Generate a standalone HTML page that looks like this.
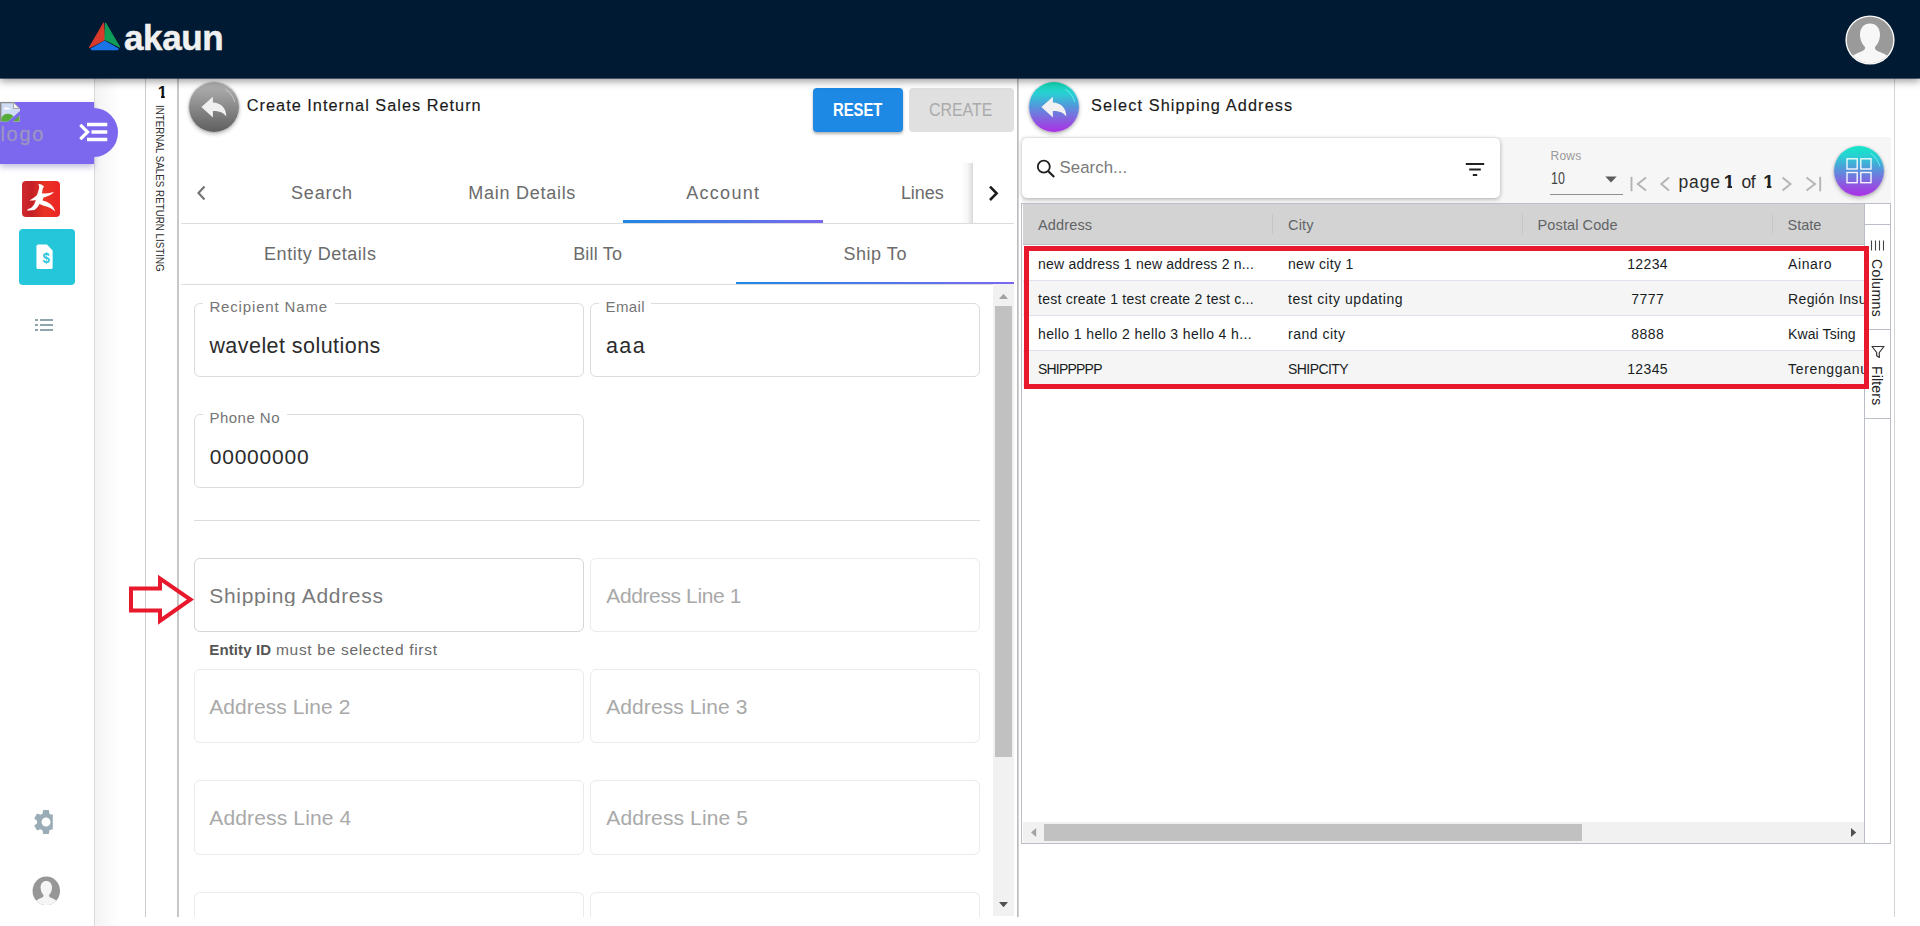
<!DOCTYPE html>
<html lang="en"><head><meta charset="utf-8"><title>akaun - Create Internal Sales Return</title>
<style>
html,body{margin:0;padding:0;}
body{width:1920px;height:926px;overflow:hidden;background:#fff;position:relative;font-family:"Liberation Sans",Arial,sans-serif;color:#222;}
.a{position:absolute;}
.t{position:absolute;white-space:nowrap;line-height:1;}
#hdr{left:0;top:0;width:1920px;height:78px;background:#001a33;box-shadow:0 1px 0 rgba(0,26,51,.62),0 3px 8px rgba(0,0,0,.42);z-index:20;}
#side{left:0;top:78px;width:94px;height:848px;background:#fff;border-right:1px solid #d9d9d9;z-index:5;}
#gap{left:95px;top:78px;width:50px;height:848px;background:linear-gradient(90deg,#f3f3f3 0,#fff 24px);}
#strip{left:145px;top:78px;width:31px;height:839px;border-left:1px solid #ccc;border-right:2px solid #c8c8c8;background:#fff;}
#lp{left:179px;top:78px;width:838px;height:839px;background:#fff;overflow:hidden;}
#rp{left:1018px;top:78px;width:875px;height:839px;background:#fff;border-left:1px solid #ccc;border-right:1px solid #d4d4d4;}
.circ{border-radius:50%;width:50px;height:50px;box-shadow:0 2px 4px rgba(0,0,0,.28),0 0 0 1px rgba(190,170,210,.25);}
.btn{border-radius:4px;height:44px;top:88px;}
.fld{border:1px solid #dcdcdc;border-radius:6px;box-sizing:border-box;width:390px;height:74px;background:#fff;}
.fld.dis{border-color:#ebebeb;}
.lbl{background:#fff;padding:0 6.5px;color:#757575;}
.ph{color:#a9a9a9;}
.tab{color:#6b6b6b;}
.gt{color:#181d1f;}
</style></head><body>

<!-- header -->
<div class="a" id="hdr">
  <svg class="a" style="left:88px;top:21px" width="34" height="31" viewBox="0 0 34 31">
    <path d="M15.6 2.2 L1.6 26.4 L16.6 18.6 Z" fill="#d93a2b" stroke="#d93a2b" stroke-width="1.2" stroke-linejoin="round"></path>
    <path d="M17.6 2.2 L31.6 26.0 L17.0 18.4 Z" fill="#0f9d58" stroke="#0f9d58" stroke-width="1.2" stroke-linejoin="round"></path>
    <path d="M16.6 19.6 L30.6 27.4 Q31 29.3 29 29.3 L4.2 29.3 Q2.2 29.3 2.6 27.4 Z" fill="#1a73e8"></path>
  </svg>
  <span class="t" id="logo" style="left: 124px; top: 19.5px; font-size: 35px; font-weight: bold; color: rgb(240, 240, 240); -webkit-text-stroke: 0.5px rgb(240, 240, 240); letter-spacing: -0.37px;">akaun</span>
  <svg class="a" style="left:1845.200px;top:14.900px" width="50" height="50" viewBox="0 0 50 50">
    <defs><clipPath id="cp1"><circle cx="25" cy="25" r="23.2"></circle></clipPath></defs>
    <circle cx="25" cy="25" r="24.6" fill="#fafafa"></circle>
    <circle cx="25" cy="25" r="23.2" fill="#9a9a9a"></circle>
    <g clip-path="url(#cp1)" fill="#f7f7f7">
      <path d="M25 8.5 C31 8.5 35 13 35 19.5 C35 25 32.5 29.5 30 32 C29.6 34 30.5 35.3 33 36.3 C38 38.2 42.5 40 44 43 L44 52 L6 52 L6 43 C7.5 40 12 38.2 17 36.3 C19.5 35.3 20.4 34 20 32 C17.5 29.5 15 25 15 19.5 C15 13 19 8.5 25 8.5 Z"></path>
    </g>
  </svg>
</div>

<!-- left sidebar -->
<div class="a" id="side">
  <div class="a" style="left:0;top:24px;width:94px;height:62px;background:#7b68ee;box-shadow:0 3px 6px rgba(80,70,160,.35)"></div>
</div>
<div class="a" style="left:70px;top:108px;width:48px;height:49px;border-radius:0 25px 25px 0;background:#7b68ee;z-index:6"></div>
<div class="a" style="left:0;top:102px;width:94px;height:62px;background:#7b68ee;z-index:6"></div>
<svg class="a" style="left:0;top:102px;z-index:7" width="20" height="20" viewBox="0 0 20 20">
  <path d="M0 0 H13.500 L20 6.500 V9 L8 19.500 H0 Z" fill="#cfdcf5"></path>
  <path d="M0 0.600 H13.500 M0.700 0 V19.500" stroke="#8c8c8c" stroke-width="1.400" fill="none"></path>
  <path d="M13.500 0.500 V6.500 H19.500 Z" fill="#f4f4f4" stroke="#a6a6a6" stroke-width="1"></path>
  <path d="M4 7 C4.500 5 7 4.500 7.500 6 C9 5.500 10 6.500 9.800 7.600 H4 Z" fill="#fff"></path>
  <path d="M1.400 19.500 V16 C3 12 8 10.500 12 13 L13.500 14.500 L8 19.500 Z" fill="#56ab3a"></path>
  <path d="M13 19.500 L19.500 13.500 V19.500 Z" fill="#56ab3a"></path>
  <path d="M19.600 13.500 V19.600 H13" stroke="#a6a6a6" stroke-width="1" fill="none"></path>
</svg>
<span class="t" id="logoalt" style="left: 0.5px; top: 124px; font-size: 20px; color: rgb(154, 150, 194); -webkit-text-stroke: 0.3px rgb(154, 150, 194); z-index: 7; letter-spacing: 1.67px;">logo</span>
<svg class="a" style="left:78px;top:120px;z-index:7" width="32" height="24" viewBox="0 0 32 24">
  <path d="M2.300 4.800 L9.600 12 L2.300 19.200" fill="none" stroke="#fff" stroke-width="3.200"></path>
  <path d="M9 4.500 H29.300 M13.500 12 H29.300 M9 19.500 H29.300" stroke="#fff" stroke-width="3.300" fill="none"></path>
</svg>
<!-- red app icon -->
<svg class="a" style="left:22px;top:181px;z-index:6" width="38" height="36" viewBox="0 0 38 36">
  <defs><linearGradient id="rg" x1="0" y1="0" x2="1" y2="0"><stop offset="0" stop-color="#d02a30"></stop><stop offset="0.250" stop-color="#c42026"></stop><stop offset="0.600" stop-color="#ea3324"></stop><stop offset="1" stop-color="#ec2426"></stop></linearGradient></defs>
  <rect x="0" y="0" width="38" height="36" rx="4" fill="url(#rg)"></rect>
  <path d="M16.500 3 C18 2.500 21 4 22 5.500 C21 7 20.500 8 20.500 9 L20 12.500 C24 12.500 28 12 32 11 C30 13.500 26 15.500 21.500 16.500 L20.500 19.500 C25 20.500 31 23 33.300 30.500 C30 27.500 26 25.500 21 24.500 L17.500 23 C16 26 14 28 12.500 29 C10 29.500 7 29.500 4.800 29.400 C6 28 7 27.500 9 27 C11.500 25 13 22 13.800 19 C11.500 19.500 9.500 19.800 7.400 19.500 C10 18 13 16 15 14 C16 11 17 8 17.200 6 C17 5 16.800 4 16.500 3 Z" fill="#fff"></path>
</svg>
<!-- teal tile -->
<div class="a" style="left:19px;top:229px;width:56px;height:56px;border-radius:4px;background:#26c6da;z-index:6"></div>
<svg class="a" style="left:35.800px;top:244.300px;z-index:7" width="17.500" height="25.500" viewBox="0 0 20 27" preserveAspectRatio="none">
  <path d="M2.5 0.5 H12.5 L19 7 V24.5 Q19 26.5 17 26.5 H2.5 Q0.5 26.5 0.5 24.5 V2.5 Q0.5 0.5 2.5 0.5 Z" fill="#fff"></path>
  <text x="11.500" y="20.500" font-family="Liberation Sans, sans-serif" font-weight="bold" font-size="15" fill="#26c6da" text-anchor="middle">$</text>
</svg>
<!-- list icon -->
<svg class="a" style="left:34px;top:318px;z-index:6" width="20" height="14" viewBox="0 0 20 14">
  <path d="M1 2 H4 M1 7 H4 M1 12 H4 M6 2 H19 M6 7 H19 M6 12 H19" stroke="#90a4ae" stroke-width="2" fill="none"></path>
</svg>
<!-- gear -->
<svg class="a" style="left:30.800px;top:806.900px;z-index:6;clip-path:inset(0 8px 0 0)" width="30" height="30" viewBox="0 0 24 24">
  <path fill="#9aacb6" d="M19.14 12.94c.04-.3.06-.61.06-.94 0-.32-.02-.64-.07-.94l2.03-1.58a.49.49 0 0 0 .12-.61l-1.92-3.32a.488.488 0 0 0-.59-.22l-2.39.96c-.5-.38-1.03-.7-1.62-.94l-.36-2.54a.484.484 0 0 0-.48-.41h-3.84c-.24 0-.43.17-.47.41l-.36 2.54c-.59.24-1.13.57-1.62.94l-2.39-.96c-.22-.08-.47 0-.59.22L2.74 8.87c-.12.21-.08.47.12.61l2.03 1.58c-.05.3-.09.63-.09.94s.02.64.07.94l-2.03 1.58a.49.49 0 0 0-.12.61l1.92 3.32c.12.22.37.29.59.22l2.39-.96c.5.38 1.03.7 1.62.94l.36 2.54c.05.24.24.41.48.41h3.84c.24 0 .44-.17.47-.41l.36-2.54c.59-.24 1.13-.56 1.62-.94l2.39.96c.22.08.47 0 .59-.22l1.92-3.32c.12-.22.07-.47-.12-.61l-2.01-1.58zM12 15.6c-1.98 0-3.6-1.62-3.6-3.6s1.620-3.6 3.6-3.6 3.6 1.620 3.600 3.600-1.620 3.600-3.600 3.600z"></path>
</svg>
<!-- small avatar -->
<svg class="a" style="left:31.900px;top:875.700px;z-index:6" width="28.600" height="29.800" viewBox="0 0 50 50" preserveAspectRatio="none">
  <defs><clipPath id="cp2"><circle cx="25" cy="25" r="24"></circle></clipPath></defs>
  <circle cx="25" cy="25" r="24" fill="#979797"></circle>
  <g clip-path="url(#cp2)" fill="#f5f5f5">
    <path d="M25 8.5 C31 8.5 35 13 35 19.500 C35 25 32.5 29.5 30 32 C29.6 34 30.5 35.3 33 36.3 C38 38.2 42.5 40 44 43 L44 52 L6 52 L6 43 C7.5 40 12 38.2 17 36.3 C19.5 35.3 20.4 34 20 32 C17.5 29.5 15 25 15 19.5 C15 13 19 8.5 25 8.5 Z"></path>
  </g>
</svg>
<div class="a" id="gap"></div>
<div class="a" id="strip"></div>
<span class="t" style="left:157.800px;top:84px;font-size:16.500px;font-weight:bold;color:#111;clip-path:polygon(0 0,9.200px 0,9.200px 11px,7px 11px,7px 16.500px,3.200px 16.500px,3.200px 11px,0 11px)">1</span>
<span class="t" id="vtxt" style="left: 165px; top: 105.3px; font-size: 11px; color: rgb(46, 46, 46); transform-origin: 0px 0px; transform: rotate(90deg) scaleX(0.89);">INTERNAL SALES RETURN LISTING</span>
<div class="a" id="lp"></div>
<!-- left panel content (page coords) -->
<div class="a circ" style="left:189px;top:82px;background:linear-gradient(180deg,#b5b5b5 0%,#8a8a8a 50%,#5e5e5e 100%)"></div>
<svg class="a" style="left:189px;top:82px" width="50" height="50" viewBox="0 0 50 50">
  <path d="M23.900 14.800 L12.400 25 L23.900 35.400 V29.100 C30.500 29.200 34.500 30.800 37.300 34.600 C37.300 26 32 20.900 23.900 20.500 Z" fill="#f0f0f0"></path>
  <path d="M36.800 7.500 A21.300 21.300 0 0 1 45.700 19.800" fill="none" stroke="rgba(255,255,255,.55)" stroke-width="0.800" stroke-linecap="round"></path>
</svg>
<span class="t" id="ttl1" style="left: 246.8px; top: 97px; font-size: 16.3px; color: rgb(26, 26, 26); -webkit-text-stroke: 0.15px rgb(26, 26, 26); letter-spacing: 1.02px;">Create Internal Sales Return</span>
<div class="a btn" style="left:813px;width:90px;background:#1e88e5;box-shadow:0 2px 3px rgba(0,0,0,.3)"></div>
<span class="t" style="left: 833.1px; top: 102px; font-size: 17.5px; font-weight: bold; color: rgb(255, 255, 255); transform-origin: 0px 0px; transform: scaleX(0.845);">RESET</span>
<div class="a btn" style="left:909px;width:105px;background:#e0e0e0"></div>
<span class="t" style="left: 929.4px; top: 102px; font-size: 17.5px; color: rgb(171, 171, 171); transform-origin: 0px 0px; transform: scaleX(0.91);">CREATE</span>
<!-- tabs row 1 -->
<svg class="a" style="left:195px;top:184px" width="12" height="18" viewBox="0 0 12 18"><path d="M9.500 2.500 L3.500 9 L9.500 15.500" fill="none" stroke="#757575" stroke-width="2.200"></path></svg>
<span class="t tab" style="left: 291.1px; top: 184px; font-size: 18px; letter-spacing: 0.76px;">Search</span>
<span class="t tab" style="left: 468.3px; top: 184px; font-size: 18px; letter-spacing: 0.73px;">Main Details</span>
<span class="t tab" style="left: 686.3px; top: 184px; font-size: 18px; letter-spacing: 1.27px;">Account</span>
<span class="t tab" style="left: 900.9px; top: 184px; font-size: 18px; letter-spacing: -0.03px;">Lines</span>
<div class="a" style="left:181px;top:223px;width:833px;height:1px;background:#dcdcdc"></div>
<div class="a" style="left:623px;top:220px;width:200px;height:3px;background:linear-gradient(90deg,#1e88e5,#7b68ee)"></div>
<div class="a" style="left:973px;top:163px;width:42px;height:60px;background:#fff"></div>
<div class="a" style="left:961px;top:163px;width:12px;height:60px;background:linear-gradient(90deg,rgba(0,0,0,0),rgba(0,0,0,.035) 55%,rgba(0,0,0,.15))"></div>
<svg class="a" style="left:987px;top:184px" width="13" height="18" viewBox="0 0 13 18"><path d="M3 2.600 L9.600 9.300 L3 16" fill="none" stroke="#1c1c1c" stroke-width="2.600"></path></svg>
<!-- tabs row 2 -->
<span class="t tab" style="left: 264.1px; top: 245px; font-size: 18px; letter-spacing: 0.52px;">Entity Details</span>
<span class="t tab" style="left: 573.2px; top: 245px; font-size: 18px; letter-spacing: 0.17px;">Bill To</span>
<span class="t tab" style="left: 843.4px; top: 245px; font-size: 18px; letter-spacing: 0.55px;">Ship To</span>
<div class="a" style="left:181px;top:284px;width:833px;height:1px;background:#dcdcdc"></div>
<div class="a" style="left:736px;top:282px;width:278px;height:2px;background:linear-gradient(90deg,#1e88e5,#7b68ee);z-index:3"></div>
<!-- form -->
<div class="a fld" style="left:194px;top:303px"></div>
<span class="t lbl" style="left: 202.9px; top: 299px; font-size: 15px; letter-spacing: 0.85px;">Recipient Name</span>
<span class="t" style="left: 209.4px; top: 336px; font-size: 21.5px; color: rgb(43, 43, 43); letter-spacing: 0.45px;">wavelet solutions</span>
<div class="a fld" style="left:590px;top:303px"></div>
<span class="t lbl" style="left: 599.1px; top: 299px; font-size: 15px; letter-spacing: 0.35px;">Email</span>
<span class="t" style="left: 606px; top: 336px; font-size: 21.5px; color: rgb(43, 43, 43); letter-spacing: 1.38px;">aaa</span>
<div class="a fld" style="left:194px;top:414px"></div>
<span class="t lbl" style="left: 202.9px; top: 410px; font-size: 15px; letter-spacing: 0.49px;">Phone No</span>
<span class="t" style="left: 209.75px; top: 446px; font-size: 21px; color: rgb(43, 43, 43); letter-spacing: 0.77px;">00000000</span>
<div class="a" style="left:194px;top:520px;width:786px;height:1px;background:#dcdcdc"></div>
<div class="a fld" style="left:194px;top:558px;border-color:#d6d6d6"></div>
<span class="t" style="left: 209.25px; top: 585px; font-size: 21px; color: rgb(122, 122, 122); letter-spacing: 0.68px;">Shipping Address</span>
<div class="a" style="left:205px;top:606px;width:185px;height:4px;background:#fff"></div>
<div class="a fld dis" style="left:590px;top:558px"></div>
<span class="t ph" style="left: 606.25px; top: 585px; font-size: 21px; letter-spacing: -0.38px;">Address Line 1</span>
<span class="t" style="left: 209.25px; top: 642px; font-size: 15px; font-weight: bold; color: rgb(85, 85, 85); letter-spacing: 0.13px;">Entity ID</span>
<span class="t" style="left: 276px; top: 642px; font-size: 15.5px; color: rgb(106, 106, 106); letter-spacing: 0.69px;">must be selected first</span>
<div class="a fld dis" style="left:194px;top:669px"></div>
<span class="t ph" style="left: 209.25px; top: 696px; font-size: 21px; letter-spacing: 0.08px;">Address Line 2</span>
<div class="a fld dis" style="left:590px;top:669px"></div>
<span class="t ph" style="left: 606.25px; top: 696px; font-size: 21px; letter-spacing: 0.08px;">Address Line 3</span>
<div class="a fld dis" style="left:194px;top:780px;height:75px"></div>
<span class="t ph" style="left: 209.25px; top: 807px; font-size: 21px; letter-spacing: 0.15px;">Address Line 4</span>
<div class="a fld dis" style="left:590px;top:780px;height:75px"></div>
<span class="t ph" style="left: 606.25px; top: 807px; font-size: 21px; letter-spacing: 0.12px;">Address Line 5</span>
<div class="a fld dis" style="left:194px;top:892px;height:40px;border-bottom:0;border-radius:6px 6px 0 0"></div>
<div class="a fld dis" style="left:590px;top:892px;height:40px;border-bottom:0;border-radius:6px 6px 0 0"></div>
<div class="a" style="left:145px;top:917px;width:1760px;height:9px;background:#fff"></div>
<!-- red arrow annotation -->
<svg class="a" style="left:127px;top:574px" width="68" height="52" viewBox="0 0 68 52">
  <path d="M4 14.500 H33 V4.500 L63.500 25.500 L33 47 V36.500 H4 Z" fill="none" stroke="#e8192c" stroke-width="4" stroke-linejoin="miter"></path>
</svg>
<!-- left scrollbar -->
<div class="a" style="left:993px;top:284px;width:21px;height:632px;background:#f1f1f1"></div>
<div class="a" style="left:995px;top:306px;width:17px;height:451px;background:#c1c1c1"></div>
<svg class="a" style="left:993px;top:284px" width="21" height="22" viewBox="0 0 21 22"><path d="M6 15 L10.500 9.800 L15 15 Z" fill="#a3a3a3"></path></svg>
<svg class="a" style="left:993px;top:894px" width="21" height="22" viewBox="0 0 21 22"><path d="M6 8 L10.500 13.200 L15 8 Z" fill="#505050"></path></svg>
<div class="a" id="rp"></div>
<div class="a" style="left:1017px;top:78px;width:2px;height:839px;background:linear-gradient(90deg,#bdbdbd 50%,#d2d2d2 50%)"></div>
<div class="a circ" style="left:1029px;top:82px;background:linear-gradient(180deg,#12dcb6 0%,#2bcdd3 24%,#4c9fd9 45%,#6b7fde 60%,#8f55e0 80%,#ab2fe6 100%)"></div>
<svg class="a" style="left:1029px;top:82px" width="50" height="50" viewBox="0 0 50 50">
  <path d="M23.900 14.800 L12.400 25 L23.900 35.400 V29.100 C30.500 29.200 34.500 30.800 37.300 34.600 C37.300 26 32 20.900 23.900 20.500 Z" fill="#f1f1f4"></path>
  <path d="M36.800 7.500 A21.300 21.300 0 0 1 45.700 19.800" fill="none" stroke="rgba(120,255,250,.85)" stroke-width="0.800" stroke-linecap="round"></path>
</svg>
<span class="t" id="ttl2" style="left: 1091.1px; top: 97px; font-size: 16.3px; color: rgb(26, 26, 26); -webkit-text-stroke: 0.15px rgb(26, 26, 26); letter-spacing: 1.12px;">Select Shipping Address</span>
<!-- toolbar -->
<div class="a" style="left:1022px;top:137px;width:869px;height:66px;background:#f6f6f6"></div>
<div class="a" style="left:1022px;top:138px;width:478px;height:60px;background:#fff;border-radius:5px;box-shadow:0 1px 4px rgba(0,0,0,.32)"></div>
<svg class="a" style="left:1036px;top:159px" width="20" height="20" viewBox="0 0 20 20">
  <circle cx="7.800" cy="7.700" r="6" fill="none" stroke="#1f1f1f" stroke-width="1.800"></circle>
  <path d="M12.300 12.300 L18.200 18" stroke="#1f1f1f" stroke-width="2.200"></path>
</svg>
<span class="t" style="left: 1059.6px; top: 160px; font-size: 16.8px; color: rgb(122, 122, 122); letter-spacing: 0.05px;">Search...</span>
<svg class="a" style="left:1465px;top:162px" width="20" height="15" viewBox="0 0 20 15">
  <path d="M0.800 2 H19.200 M4.200 7.500 H15.800 M7.800 13 H12.200" stroke="#222" stroke-width="2.200"></path>
</svg>
<span class="t" style="left: 1550.6px; top: 150px; font-size: 12px; color: rgb(153, 153, 153); letter-spacing: 0.2px;">Rows</span>
<span class="t" style="left: 1551px; top: 171px; font-size: 16px; color: rgb(68, 68, 68); transform-origin: 0px 0px; transform: scaleX(0.778);">10</span>
<div class="a" style="left:1550px;top:194px;width:73px;height:1px;background:#8f8f8f"></div>
<svg class="a" style="left:1605px;top:176px" width="12" height="7" viewBox="0 0 12 7"><path d="M0.300 0.500 H11.700 L6 6.500 Z" fill="#5c5c5c"></path></svg>
<svg class="a" style="left:1628px;top:174px" width="200" height="20" viewBox="0 0 200 20">
  <g fill="none" stroke="#b4b4b4" stroke-width="1.900">
    <path d="M3.500 2.800 V17.300"></path><path d="M18 3.500 L9.800 10 L18 16.500"></path>
    <path d="M41 3.500 L33.200 10 L41 16.500"></path>
    <path d="M154.500 3.500 L162.500 10 L154.500 16.500"></path>
    <path d="M178.500 3.500 L187 10 L178.500 16.500"></path><path d="M192.200 2.800 V17.300"></path>
  </g>
</svg>
<span class="t" style="left: 1678.5px; top: 174px; font-size: 17.5px; color: rgb(42, 42, 42); letter-spacing: 0.83px;">page</span>
<span class="t" style="left:1723.800px;top:172px;font-size:19px;font-weight:bold;color:#222;clip-path:polygon(0 0,11px 0,11px 12.500px,8.200px 12.500px,8.200px 19px,3.700px 19px,3.700px 12.500px,0 12.500px)">1</span>
<span class="t" style="left: 1741.5px; top: 174px; font-size: 17.5px; color: rgb(42, 42, 42); letter-spacing: -0.5px;">of</span>
<span class="t" style="left:1763.200px;top:172px;font-size:19px;font-weight:bold;color:#222;clip-path:polygon(0 0,11px 0,11px 12.500px,8.200px 12.500px,8.200px 19px,3.700px 19px,3.700px 12.500px,0 12.500px)">1</span>
<div class="a circ" style="left:1834px;top:146px;background:linear-gradient(180deg,#12e8c8 0%,#2bcdd3 22%,#4c9fd9 42%,#6b7fde 58%,#8f55e0 78%,#ab2fe6 100%)"></div>
<svg class="a" style="left:1834px;top:146px" width="50" height="50" viewBox="0 0 50 50">
  <g fill="none" stroke="rgba(255,255,255,.92)" stroke-width="1.400"><rect x="13" y="12.800" width="10.200" height="10.200"></rect><rect x="26.800" y="12.800" width="10.200" height="10.200"></rect><rect x="13" y="26.500" width="10.200" height="10.200"></rect><rect x="26.800" y="26.500" width="10.200" height="10.200"></rect></g>
  <path d="M36.800 7.500 A21.300 21.300 0 0 1 45.700 19.800" fill="none" stroke="rgba(120,255,250,.85)" stroke-width="0.800" stroke-linecap="round"></path>
</svg>
<!-- grid -->
<div class="a" style="left:1021px;top:203px;width:870px;height:641px;box-sizing:border-box;border:1px solid #babfc7;background:#fff"></div>
<div class="a" style="left:1023px;top:204px;width:841px;height:41px;background:#d3d3d3;border-bottom:1px solid #babfc7;box-sizing:border-box"></div>
<div class="a" style="left:1272px;top:214px;width:1px;height:20px;background:#c3c7ca"></div>
<div class="a" style="left:1522px;top:214px;width:1px;height:20px;background:#c3c7ca"></div>
<div class="a" style="left:1772px;top:214px;width:1px;height:20px;background:#c3c7ca"></div>
<span class="t" style="left: 1037.9px; top: 218px; font-size: 14.5px; color: rgb(97, 99, 101); letter-spacing: 0.17px;">Address</span>
<span class="t" style="left: 1288px; top: 218px; font-size: 14.5px; color: rgb(97, 99, 101); letter-spacing: 0.2px;">City</span>
<span class="t" style="left: 1537.6px; top: 218px; font-size: 14.5px; color: rgb(97, 99, 101); letter-spacing: 0.1px;">Postal Code</span>
<span class="t" style="left: 1787.5px; top: 218px; font-size: 14.5px; color: rgb(97, 99, 101); letter-spacing: 0px;">State</span>
<div class="a" style="left:1023px;top:246px;width:841px;height:35px;background:#fff;border-bottom:1px solid #dde2eb;box-sizing:border-box;overflow:hidden">
  <span class="t gt" style="left: 15px; top: 11px; font-size: 14px; letter-spacing: 0.21px;">new address 1 new address 2 n...</span>
  <span class="t gt" style="left: 265px; top: 11px; font-size: 14px; letter-spacing: 0.33px;">new city 1</span>
  <span class="t gt" style="left: 604.2px; top: 11px; font-size: 14px; letter-spacing: 0.38px;">12234</span>
  <span class="t gt" style="left: 765px; top: 11px; font-size: 14px; letter-spacing: 0.6px;">Ainaro</span>
</div>
<div class="a" style="left:1023px;top:281px;width:841px;height:35px;background:#f5f5f5;border-bottom:1px solid #dde2eb;box-sizing:border-box;overflow:hidden">
  <span class="t gt" style="left: 15px; top: 11px; font-size: 14px; letter-spacing: 0.24px;">test create 1 test create 2 test c...</span>
  <span class="t gt" style="left: 265px; top: 11px; font-size: 14px; letter-spacing: 0.56px;">test city updating</span>
  <span class="t gt" style="left: 608.2px; top: 11px; font-size: 14px; letter-spacing: 0.5px;">7777</span>
  <span class="t gt" style="left: 765px; top: 11px; font-size: 14px; letter-spacing: 0.38px;">Región Insular</span>
</div>
<div class="a" style="left:1023px;top:316px;width:841px;height:35px;background:#fff;border-bottom:1px solid #dde2eb;box-sizing:border-box;overflow:hidden">
  <span class="t gt" style="left: 15px; top: 11px; font-size: 14px; letter-spacing: 0.39px;">hello 1 hello 2 hello 3 hello 4 h...</span>
  <span class="t gt" style="left: 265px; top: 11px; font-size: 14px; letter-spacing: 0.5px;">rand city</span>
  <span class="t gt" style="left: 608.2px; top: 11px; font-size: 14px; letter-spacing: 0.5px;">8888</span>
  <span class="t gt" style="left: 765px; top: 11px; font-size: 14px; letter-spacing: 0.11px;">Kwai Tsing</span>
</div>
<div class="a" style="left:1023px;top:351px;width:841px;height:35px;background:#f5f5f5;border-bottom:1px solid #dde2eb;box-sizing:border-box;overflow:hidden">
  <span class="t gt" style="left: 15px; top: 11px; font-size: 14px; letter-spacing: -0.79px;">SHIPPPPP</span>
  <span class="t gt" style="left: 265px; top: 11px; font-size: 14px; letter-spacing: -0.57px;">SHIPCITY</span>
  <span class="t gt" style="left: 604.2px; top: 11px; font-size: 14px; letter-spacing: 0.38px;">12345</span>
  <span class="t gt" style="left: 765px; top: 11px; font-size: 14px; letter-spacing: 0.67px;">Terengganu</span>
</div>
<!-- side bar -->
<div class="a" style="left:1864px;top:204px;width:26px;height:639px;background:#fff;border-left:1px solid #babfc7;box-sizing:border-box"></div>
<div class="a" style="left:1865px;top:224px;width:25px;height:1px;background:#babfc7"></div>
<div class="a" style="left:1865px;top:329px;width:25px;height:1px;background:#babfc7"></div>
<div class="a" style="left:1865px;top:418px;width:25px;height:1px;background:#babfc7"></div>
<svg class="a" style="left:1870px;top:240px" width="15" height="11" viewBox="0 0 15 11"><path d="M1.500 0.500 V10.500 M5.500 0.500 V10.500 M9.500 0.500 V10.500 M13.500 0.500 V10.500" stroke="#444" stroke-width="1.100"></path></svg>
<span class="t" style="left: 1883.7px; top: 258.6px; font-size: 14px; color: rgb(34, 34, 34); transform-origin: 0px 0px; transform: rotate(90deg); letter-spacing: 0.42px;">Columns</span>
<svg class="a" style="left:1870.500px;top:345px" width="14" height="14" viewBox="0 0 14 14"><path d="M1 1.500 H13 L8.300 7.500 V12.500 L5.700 10.800 V7.500 Z" fill="none" stroke="#333" stroke-width="1.200" stroke-linejoin="round"></path></svg>
<span class="t" style="left: 1883.7px; top: 365.7px; font-size: 14px; color: rgb(34, 34, 34); transform-origin: 0px 0px; transform: rotate(90deg); letter-spacing: 0.17px;">Filters</span>
<!-- red annotation -->
<div class="a" style="left:1024px;top:246px;width:845px;height:142.500px;box-sizing:border-box;border:5px solid #e8192c"></div>
<!-- h scrollbar -->
<div class="a" style="left:1023px;top:822px;width:841px;height:21px;background:#f1f1f1"></div>
<div class="a" style="left:1044px;top:824px;width:538px;height:17px;background:#c1c1c1"></div>
<svg class="a" style="left:1023px;top:822px" width="21" height="21" viewBox="0 0 21 21"><path d="M13.200 6 L8 10.500 L13.200 15 Z" fill="#a3a3a3"></path></svg>
<svg class="a" style="left:1843px;top:822px" width="21" height="21" viewBox="0 0 21 21"><path d="M8 6 L13.200 10.500 L8 15 Z" fill="#505050"></path></svg>


</body></html>
